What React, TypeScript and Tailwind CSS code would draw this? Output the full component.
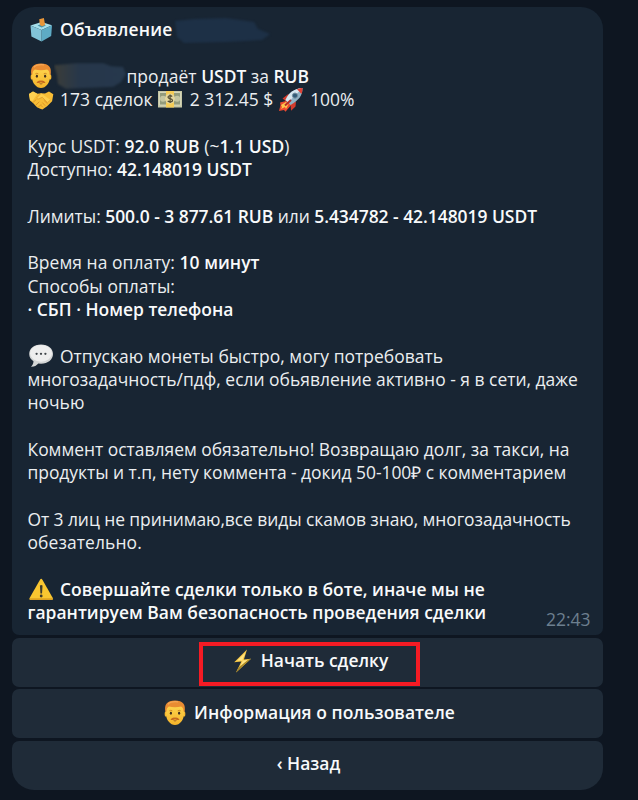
import type { ReactNode } from "react";

function BallotIcon() {
  return (
    <svg viewBox="0 0 26 26" className="h-[26px] w-[26px] shrink-0">
      <path d="M2.5 8.5 13.5 5 24 8.2 13.6 13Z" fill="#a5dfeb" />
      <path d="M2.5 8.5 13.6 13V24.500L3.400 19.500Z" fill="#82c4d8" />
      <path d="M24 8.2 13.6 13V24.500L23.200 19.100Z" fill="#5eabc5" />
      <path d="m9.5 8.600 4-1.500 4.500 1.300-4.400 2Z" fill="#4b91a6" />
      <path d="m11.200 2.300 4.700-1.200 1.200 6.900-3 1.200-2.200-1.100Z" fill="#e89639" />
    </svg>
  );
}

function ManIcon() {
  return (
    <svg viewBox="0 0 26 28" className="h-[28px] w-[26px] shrink-0">
      <defs>
        <linearGradient id="face" x2="0" y2="1">
          <stop stopColor="#ffd952" />
          <stop offset="1" stopColor="#f4b32a" />
        </linearGradient>
      </defs>
      <ellipse cx="3.9" cy="15" rx="1.3" ry="2.7" fill="#f6b72d" />
      <ellipse cx="22.1" cy="15" rx="1.3" ry="2.7" fill="#f6b72d" />
      <path d="M4 9.500C4.500 5 8 3.700 13 3.700s8.500 1.300 9 5.800c.4 4.800.1 9.800-2.600 13-1.900 2.300-4 3.600-6.400 3.600s-4.500-1.300-6.400-3.600C3.900 19.300 3.600 14.300 4 9.500Z" fill="url(#face)" />
      <path d="M3.400 12.800C2 5.500 5 1.500 13 1.500S24 5.500 22.600 12.800l-1.100-.2c0-3-.9-4.500-2.400-5.100-3.600.9-8.600.9-12.200 0-1.500.6-2.400 2.100-2.400 5.100Z" fill="#e98c32" />
      <path d="M6 5.200C8 2.900 12 2.400 16 2.800" stroke="#f6a654" strokeWidth="1.3" fill="none" />
      <path d="M7.300 11.800q1.500-1 3 0M15.700 11.800q1.500-1 3 0" stroke="#c67e22" strokeWidth=".8" fill="none" />
      <ellipse cx="8.900" cy="14.300" rx="1.100" ry="1.450" fill="#42301f" />
      <ellipse cx="17.100" cy="14.300" rx="1.100" ry="1.450" fill="#42301f" />
      <path d="M13 18.800c-1.600-.7-3.200.3-4.500 1.900 1.700.6 3.300.2 4.500-.4 1.200.6 2.800 1 4.500.4-1.300-1.600-2.900-2.600-4.500-1.900Z" fill="#c5691f" />
      <path d="M11.200 21.400h3.600q-1.800 1.700-3.600 0Z" fill="#8a4520" />
    </svg>
  );
}

function HandshakeIcon() {
  return (
    <svg viewBox="0 0 26 24" className="h-[24px] w-[26px] shrink-0">
      <path d="m1 6 4-2.500 4.300 2.200 3.700-.4 4 .3 4-2.200 4.300 2.800-1.200 7-5 5-4.700 3.300-2.200-.8-3.200-1.500-4-4.200-3-2.500Z" fill="#f8bd35" />
      <path d="m1 6 4-2.500 4.300 2.200-5 7.500L2 12Z" fill="#ffd151" />
      <path d="m13 5.300-4 4.200c-.5 1.500 1.500 2 3 .8l2.300-1 5.200 5.200 3-2.500" fill="#ffcf4c" stroke="#dc9728" strokeWidth=".7" />
      <path d="m5.500 14 2.500-2.200M8 17l3-3M10.500 19l2.500-2.500M14.500 19l-1.400-1.500M17 17.500l-2.500-2.700M19.300 15.500l-3.200-3" stroke="#d48b22" strokeWidth=".8" strokeLinecap="round" fill="none" />
    </svg>
  );
}

function MoneyIcon() {
  return (
    <svg viewBox="0 0 26 22" className="h-[22px] w-[26px] shrink-0">
      <path d="M1 2h24v16.500H1Z" fill="#c5c6a5" />
      <path d="M2.500 3.500h21V16h-21Z" fill="#929b7c" stroke="#dfdfc3" strokeWidth=".8" />
      <circle cx="6" cy="9.800" r="3" fill="#c4c6a2" />
      <circle cx="20.200" cy="9.800" r="3" fill="#c4c6a2" />
      <path d="M9 2h8v16.500H9Z" fill="#f4cc57" />
      <circle cx="13" cy="9.800" r="5" fill="#e4d79f" />
      <path d="M15.200 7.500c-1.500-1.300-4.200-1-4.200.7 0 2 4.500 1 4.500 3.200 0 1.700-3 2-4.800.6M13.100 5.400v8.700" stroke="#514b32" strokeWidth="1.200" fill="none" />
    </svg>
  );
}

function RocketIcon() {
  return (
    <svg viewBox="0 0 26 26" className="h-[26px] w-[26px] shrink-0">
      <path d="m4.500 11.500 5.500-4.200 2.500 1-4.500 6ZM12.500 17l5.500-2.500-.5 5-4.500 4.300Z" fill="#d43c2e" />
      <path d="M8 14 2 15.500l.5 2.500L1 24l5-1 1.500 1.800L14 17Z" fill="#ec4930" />
      <path d="m8 15-5 3 1 2-1 2 4-2 1 2 2.500-5Z" fill="#ffc74c" />
      <path d="M7.500 13C11 5 17 1.500 24.500 1c.2 7.500-4 12.500-12 17Z" fill="#91b3c5" />
      <path d="M7.500 13C11 5 17 1.500 24.500 1L10 15.500Z" fill="#d6e8f0" />
      <path d="M19 2.200C21 1.300 22.700 1 24.500 1c0 2-.2 4-1 6Z" fill="#df4135" />
      <circle cx="17" cy="8.600" r="2.600" fill="#335d78" stroke="#7994a4" />
      <path d="m7 18.500 6-5.500" stroke="#b52e29" strokeWidth="2" />
    </svg>
  );
}

function BubbleIcon() {
  return (
    <svg viewBox="0 0 26 26" className="h-[26px] w-[26px] shrink-0">
      <path d="M13 1.500C6 1.500 1.200 5.500 1.200 11c0 3.200 1.700 5.600 4.300 7.200 0 2.300-1.300 4.300-2.500 5.600 3 .2 5.500-1.200 7.300-3.300l2.700.2c7 0 12-4 12-9.600s-5-9.600-12-9.600Z" fill="#d3d5d5" />
      <ellipse cx="13" cy="10.300" rx="11" ry="8.400" fill="#eeeeee" />
      <g fill="#3f4549">
        <circle cx="8.600" cy="10.800" r="1.150" />
        <circle cx="13" cy="10.800" r="1.150" />
        <circle cx="17.400" cy="10.800" r="1.150" />
      </g>
    </svg>
  );
}

function WarningIcon() {
  return (
    <svg viewBox="0 0 26 26" className="h-[26px] w-[26px] shrink-0">
      <path d="M12 2.700q1.200-1.800 2.400 0l10.400 18.200q.8 1.900-1.200 2H2.800q-2-.1-1.200-2Z" fill="#f9c630" />
      <path d="M1.500 21.300h23.400q.2 1.700-1.500 1.800H3q-1.700-.1-1.500-1.800Z" fill="#dba020" />
      <path d="M11.900 8.400q1.300-1 2.600 0l-.5 8h-1.600Z" fill="#3d3a2d" />
      <circle cx="13.200" cy="19" r="1.400" fill="#3d3a2d" />
    </svg>
  );
}

function BoltIcon() {
  return (
    <svg viewBox="0 0 18 24" className="h-[24px] w-[19px] shrink-0">
      <path d="M13.500.5.700 13.200l7.200-.8L2.500 23.500l15-13.800-7.100.7Z" fill="#f5c544" />
      <path d="m12 3.500-8.500 8.300 6-.6-3.800 8 8.500-8.200-5.500.4Z" fill="#ffe481" />
      <path d="m2.500 23.500 15-13.800-1.700.2L5 18.500Z" fill="#a88727" />
    </svg>
  );
}

function Line({ children, className = "" }: { children?: ReactNode; className?: string }) {
  return (
    <div className={`flex h-[23.34px] w-max items-center whitespace-pre ${className}`}>
      {children}
    </div>
  );
}

function B({ children }: { children: ReactNode }) {
  return <span className="font-semibold text-[#f8fafb]">{children}</span>;
}

function Emoji({ children }: { children: ReactNode }) {
  return <span className="mr-[6.5px] flex w-[26px] shrink-0 items-center">{children}</span>;
}

export default function App() {
  return (
    <main className="h-[800px] w-[638px] overflow-hidden bg-[#0e1621] pt-[7px] pl-[12px] font-['Open_Sans',sans-serif] text-[17.45px] leading-[23.34px] text-[#ebeef0]">
      <section className="relative h-[628px] w-[591px] rounded-t-[22px] rounded-b-[7px] bg-[#182533] pt-[11px] pl-[15.5px]">
        <Line>
          <Emoji><BallotIcon /></Emoji>
          <span className="tracking-[0.15px]"><B>Объявление</B></span>
          <svg viewBox="0 0 98 28" className="ml-[2px] h-[28px] w-[98px]">
            <path d="M1 5 20 3l32-1 28 4 4 7 12 5-8 6-36 2-42 1-7-6Z" fill="#1d3046" className="blur-[1px]" />
          </svg>
        </Line>
        <Line />
        <Line>
          <span className="flex w-[26px] shrink-0"><ManIcon /></span>
          <svg viewBox="0 0 74 28" className="h-[28px] w-[73px]">
            <defs>
              <linearGradient id="smudge">
                <stop stopColor="#3b3d39" />
                <stop offset=".35" stopColor="#27374a" />
                <stop offset="1" stopColor="#26384d" />
              </linearGradient>
            </defs>
            <path d="M0 3 22 1l28 0 8 3 12 1 3 7-5 8-8 5-48 2-8-5-1-9Z" fill="url(#smudge)" className="blur-[1px]" />
          </svg>
          <span className="tracking-[0.05px]">продаёт </span><B>USDT</B><span> за </span><B>RUB</B>
        </Line>
        <Line>
          <Emoji><HandshakeIcon /></Emoji>
          <span className="tracking-[0.05px]">173 сделок </span>
          <Emoji><MoneyIcon /></Emoji>
          <span>2 312.45 $ </span>
          <Emoji><RocketIcon /></Emoji>
          <span>100%</span>
        </Line>
        <Line />
        <Line className="tracking-[0.04px]"><span>Курс USDT: </span><B>92.0 RUB</B><span> (~</span><B>1.1 USD</B><span>)</span></Line>
        <Line className="tracking-[0.04px]"><span>Доступно: </span><B>42.148019 USDT</B></Line>
        <Line />
        <Line className="-tracking-[0.03px]"><span>Лимиты: </span><B>500.0 - 3 877.61 RUB</B><span> или </span><B>5.434782 - 42.148019 USDT</B></Line>
        <Line />
        <Line className="tracking-[0.06px]"><span>Время на оплату: </span><B>10 минут</B></Line>
        <Line className="tracking-[0.06px]">Способы оплаты:</Line>
        <Line><B>· СБП · Номер телефона</B></Line>
        <Line />
        <Line className="tracking-[0.05px]"><Emoji><BubbleIcon /></Emoji>Отпускаю монеты быстро, могу потребовать</Line>
        <Line>многозадачность/пдф, если обьявление активно - я в сети, даже</Line>
        <Line>ночью</Line>
        <Line />
        <Line>Коммент оставляем обязательно! Возвращаю долг, за такси, на</Line>
        <Line className="-tracking-[0.04px]">продукты и т.п, нету коммента - докид 50-100₽ с комментарием</Line>
        <Line />
        <Line className="-tracking-[0.07px]">От 3 лиц не принимаю,все виды скамов знаю, многозадачность</Line>
        <Line className="tracking-[0.1px]">обезательно.</Line>
        <Line />
        <Line className="tracking-[0.02px]"><Emoji><WarningIcon /></Emoji><B>Совершайте сделки только в боте, иначе мы не</B></Line>
        <Line className="tracking-[0.02px]"><B>гарантируем Вам безопасность проведения сделки</B></Line>
        <time className="absolute right-[12.5px] bottom-[4px] text-[17.5px] text-[#6d7f8f]">22:43</time>
      </section>

      <div className="mt-[2.5px] flex w-[591px] flex-col gap-[2.5px] font-semibold text-[#f8fafb]">
        <button className="relative flex h-[49px] items-center justify-center rounded-[7px] bg-[#1f2b38] pb-[3px] pl-[6px]">
          <BoltIcon />
          <span className="ml-[9px]">Начать сделку</span>
          <span className="absolute top-[4px] left-[187px] h-[44px] w-[221px] border-4 border-[#f51b24]" />
        </button>
        <button className="flex h-[49px] items-center justify-center rounded-[7px] bg-[#1f2b38] pb-[2px] pl-[2px]">
          <ManIcon />
          <span className="ml-[6px] tracking-[0.05px]">Информация о пользователе</span>
        </button>
        <button className="h-[49px] rounded-t-[7px] rounded-b-[22px] bg-[#1f2b38] pb-[3px] pl-[2px]">‹ Назад</button>
      </div>
    </main>
  );
}
